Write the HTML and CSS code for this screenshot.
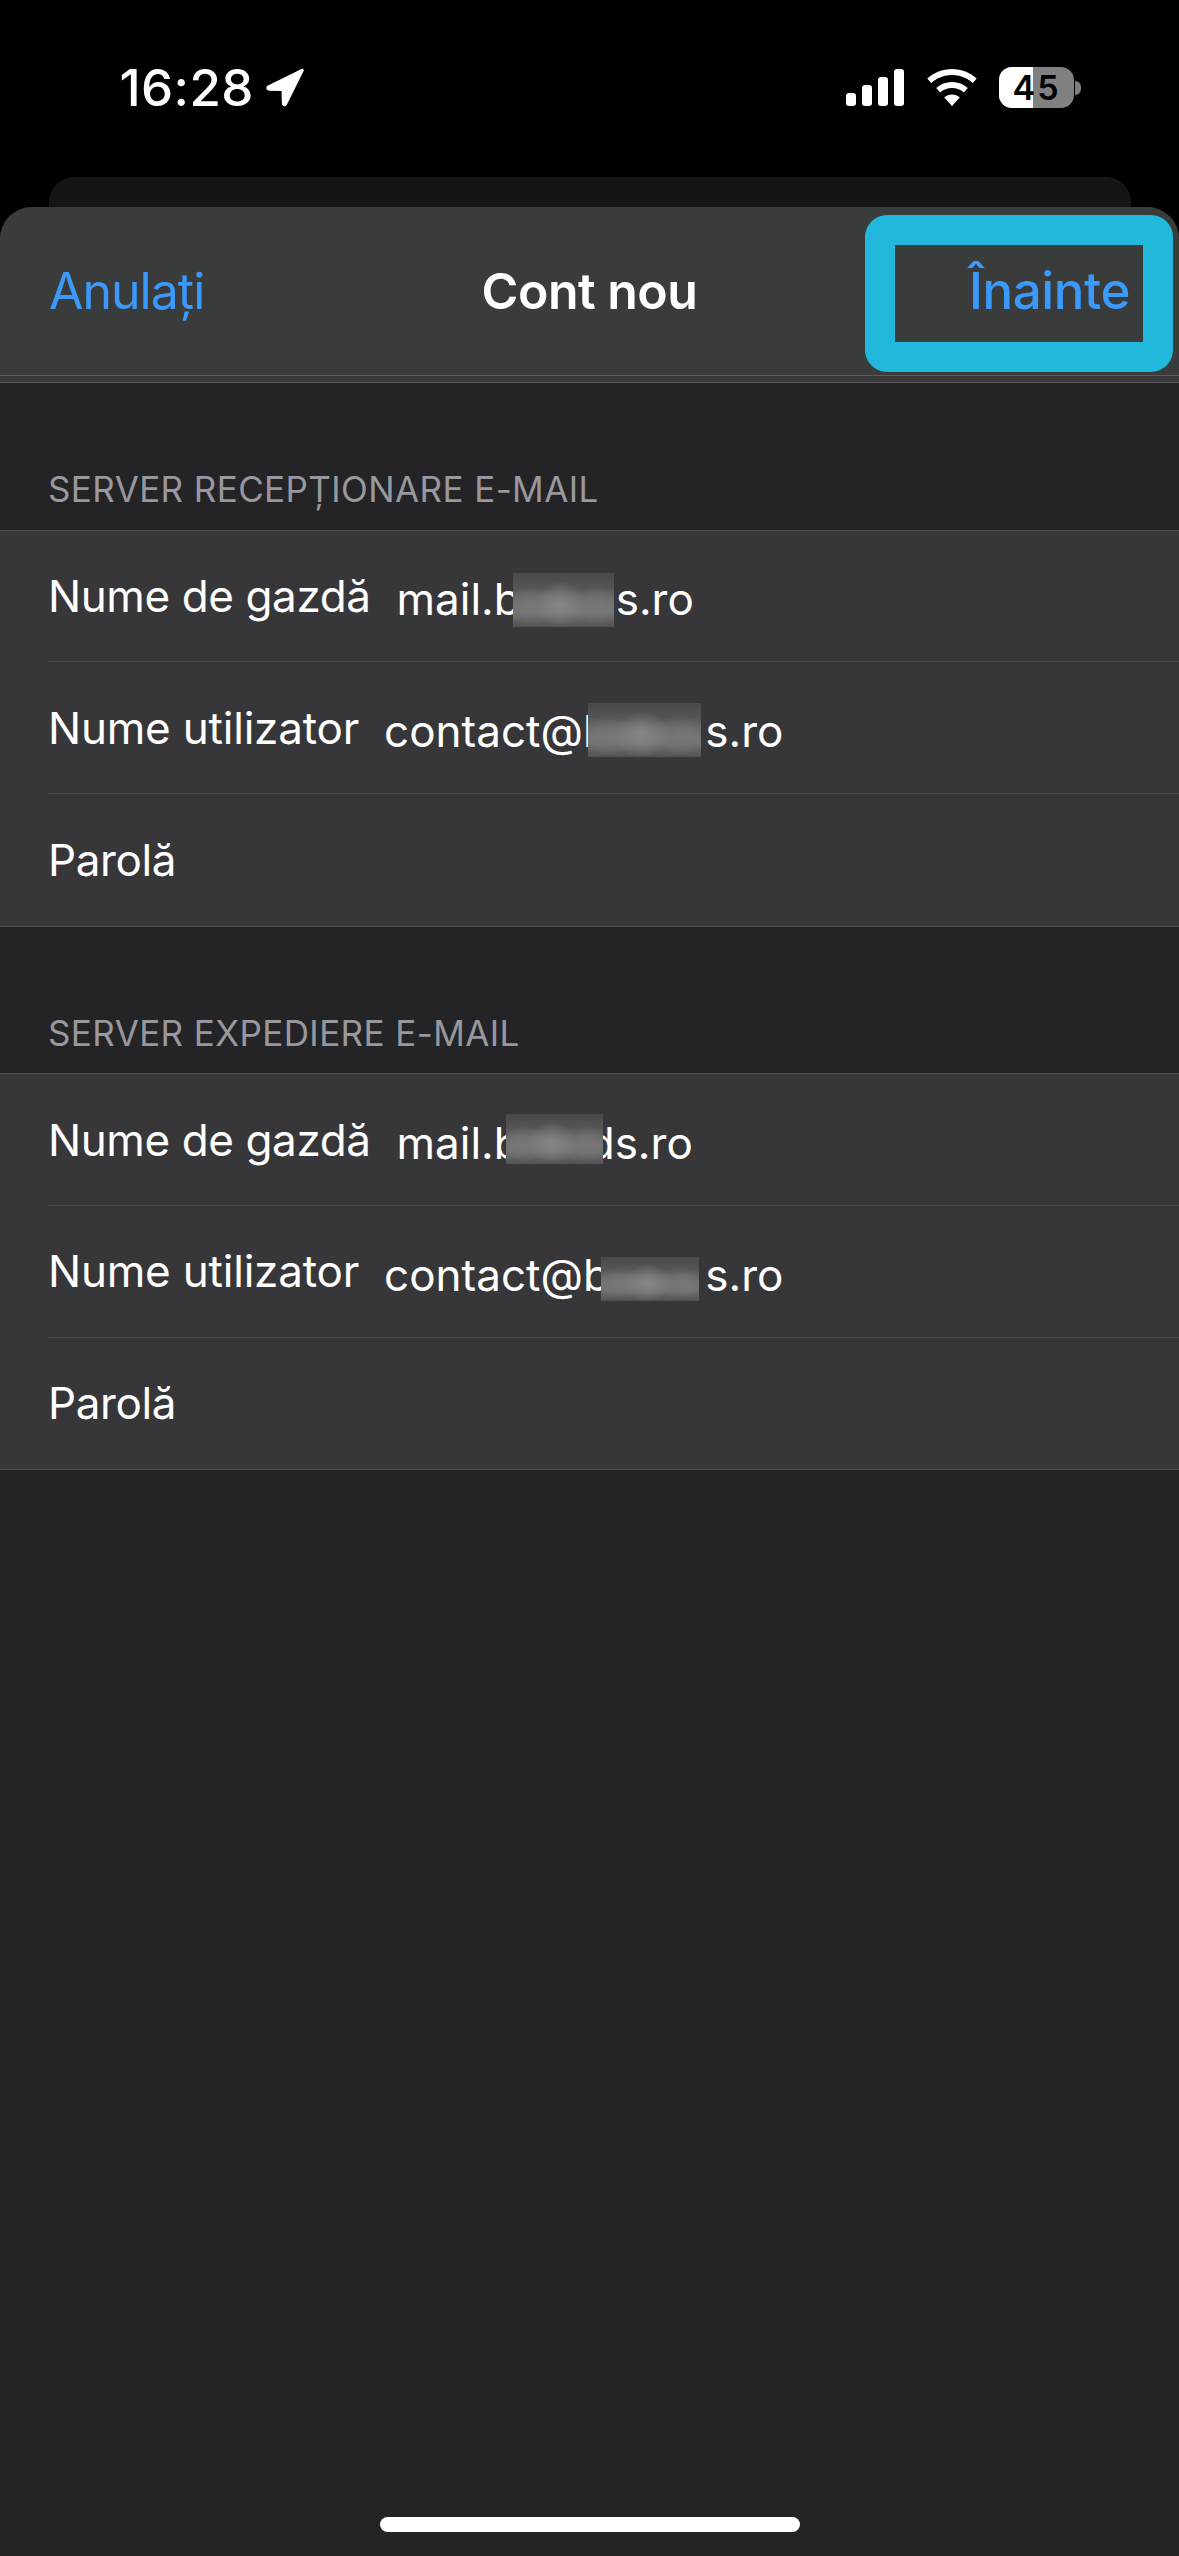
FILE: index.html
```html
<!DOCTYPE html>
<html lang="ro">
<head>
<meta charset="utf-8">
<title>Cont nou</title>
<link rel="stylesheet" href="styles.css">
</head>
<body>
<div class="screen">
  <header class="status">
    <div class="status-left">
      <span class="time">16:28</span>
      <svg class="loc" viewBox="0 0 39 39"><path d="M36.5 1 3 17.6c-2.7 1.4-1.9 5 1.100 5.100L16.500 23l.4 12.600c.1 3.100 3.900 3.800 5.100 1L38.600 3c.7-1.500-.7-2.800-2.100-2z" fill="#fff"/></svg>
    </div>
    <div class="status-right">
      <svg class="signal" viewBox="0 0 58 37"><rect x="0" y="24" width="10" height="13" rx="3" fill="#fff"/><rect x="16" y="16" width="10" height="21" rx="3" fill="#fff"/><rect x="32" y="8" width="10" height="29" rx="3" fill="#fff"/><rect x="48" y="0" width="10" height="37" rx="3" fill="#fff"/></svg>
      <svg class="wifi" viewBox="0 0 50 37"><path d="M25 0c9.500 0 18.200 3.600 24.700 9.600l-3.900 4.500C40.300 9 33 6 25 6S9.700 9 4.200 14.100L.3 9.600C6.800 3.600 15.500 0 25 0z" fill="#fff"/><path d="M25 13c6.100 0 11.600 2.300 15.800 6l-3.900 4.500c-3.200-2.800-7.400-4.500-11.900-4.500s-8.700 1.700-11.900 4.500L9.200 19c4.200-3.700 9.700-6 15.800-6z" fill="#fff"/><path d="M25 25.500c3 0 5.700 1.100 7.800 2.900L25 37l-7.800-8.600c2.100-1.800 4.800-2.900 7.800-2.900z" fill="#fff"/></svg>
      <div class="battery">
        <div class="cell"><span class="fill"></span><span class="pct">45</span></div>
        <span class="tip"></span>
      </div>
    </div>
  </header>

  <div class="peek"></div>

  <main class="sheet">
    <nav class="nav">
      <span class="nav-btn nav-cancel">Anulați</span>
      <span class="nav-title">Cont nou</span>
      <span class="nav-btn nav-next">Înainte<span class="mark"></span></span>
    </nav>
    <div class="strip"></div>

    <section class="group">
      <h2 class="group-title">SERVER RECEPȚIONARE E-MAIL</h2>
      <div class="rows">
        <div class="row">
          <span class="label">Nume de gazdă</span>
          <span class="value value-host">mail.b<span class="gap gap-a"><i class="blur"></i></span>s.ro</span>
        </div>
        <div class="row">
          <span class="label label-user">Nume utilizator</span>
          <span class="value value-user">contact@b<span class="gap gap-b"><i class="blur"></i></span>s.ro</span>
        </div>
        <div class="row"><span class="label">Parolă</span></div>
      </div>
    </section>

    <section class="group">
      <h2 class="group-title">SERVER EXPEDIERE E-MAIL</h2>
      <div class="rows">
        <div class="row">
          <span class="label">Nume de gazdă</span>
          <span class="value value-host">mail.b<span class="gap gap-c"><i class="blur"></i></span>ds.ro</span>
        </div>
        <div class="row">
          <span class="label label-user">Nume utilizator</span>
          <span class="value value-user">contact@b<span class="gap gap-d"><i class="blur"></i></span>s.ro</span>
        </div>
        <div class="row"><span class="label">Parolă</span></div>
      </div>
    </section>

    <div class="home"></div>
  </main>
</div>
</body>
</html>
```
FILE: styles.css
```css
* { box-sizing: border-box; }
html, body { margin: 0; padding: 0; background: #000; }
body { font-family: Inter, "Noto Sans", sans-serif; color: #fff; }
.screen { width: 1179px; height: 2556px; display: flex; flex-direction: column; overflow: hidden; }

.status { height: 177px; display: flex; justify-content: space-between; align-items: flex-start; padding: 67px 98px 0 119.500px; flex: none; }
.status-left { display: flex; align-items: center; gap: 11px; height: 41px; }
.time { font-size: 51px; font-weight: 500; line-height: 41px; letter-spacing: 0.4px; }
.loc { width: 39px; height: 39px; display: block; }
.status-right { display: flex; align-items: center; height: 41px; }
.signal { width: 58px; height: 37px; display: block; }
.wifi { width: 50px; height: 37px; display: block; margin-left: 23px; }
.battery { display: flex; align-items: center; margin-left: 22px; }
.cell { position: relative; width: 75px; height: 41px; border-radius: 13px; background: #808080; overflow: hidden; display: flex; align-items: center; justify-content: center; }
.fill { position: absolute; left: 0; top: 0; bottom: 0; width: 34px; background: #fff; }
.pct { position: relative; color: #000; font-size: 34px; font-weight: 600; line-height: 1; letter-spacing: 2px; }
.tip { width: 6px; height: 14px; margin-left: 1px; background: #808080; border-radius: 0 7px 7px 0; }

.peek { flex: none; height: 30px; margin: 0 48px 0 49px; background: #151515; border-radius: 25px 25px 0 0; }

.sheet { position: relative; flex: 1; background: #242426; border-radius: 32px 32px 0 0; overflow: hidden; }

.nav { position: relative; height: 168px; padding: 0 49px; background: #3a3c3b; display: flex; align-items: center; justify-content: space-between; }
.nav-btn { font-size: 51px; color: #3b99fc; line-height: 62px; }
.nav-cancel { font-size: 50px; letter-spacing: -1px; }
.nav-next { font-weight: 500; letter-spacing: -0.4px; }
.nav-title { position: absolute; left: 0; right: 0; text-align: center; font-size: 50px; font-weight: 600; line-height: 62px; letter-spacing: -0.5px; }
.mark { position: absolute; left: 865px; top: 8px; width: 308px; height: 157px; border: solid #22b8dc; border-width: 30px; border-radius: 22px; }

.strip { height: 8px; background: #3a3a3c; border-top: 1px solid #5c5c5e; border-bottom: 1px solid #5a5a5c; }

.group-title { margin: 0; height: 146.600px; padding: 84px 48px 0; font-size: 35px; font-weight: 400; line-height: 44px; color: #98989e; letter-spacing: 0.4px; }
.rows { background: #373739; border-top: 1px solid #4e4e50; border-bottom: 1px solid #4e4e50; }
.row { height: 131.700px; margin-left: 48px; display: flex; align-items: center; border-bottom: 1px solid #48484a; }
.row:last-child { border-bottom: 0; }
.label { font-size: 44px; line-height: 52px; letter-spacing: -0.4px; }
.label-user { letter-spacing: -0.2px; }
.value { font-size: 44px; line-height: 52px; padding-top: 7px; white-space: nowrap; }
.value-host { margin-left: 26px; }
.value-user { margin-left: 25px; }
.gap { position: relative; display: inline-block; height: 1px; }
.blur {
  position: absolute;
  background:
    radial-gradient(ellipse 26% 42% at 47% 58%, #868686, transparent),
    radial-gradient(ellipse 30% 36% at 18% 60%, #777, transparent),
    radial-gradient(ellipse 30% 36% at 82% 60%, #777, transparent),
    linear-gradient(#49494b, #565657 30%, #717171 58%, #737373 72%, #525254);
}
.gap-a { width: 95px; }
.gap-a .blur { left: -8px; width: 101px; bottom: -12px; height: 54px; }
.gap-b { width: 95.500px; }
.gap-b .blur { left: -21.500px; width: 113px; bottom: -10px; height: 54px; }
.gap-c { width: 67px; }
.gap-c .blur { left: -15px; width: 97px; bottom: -5px; height: 50px; }
.gap-d { width: 95.500px; }
.gap-d .blur { left: -8.500px; width: 98px; bottom: -10px; height: 44px; }
.home { position: absolute; left: 380px; top: 2310px; width: 420px; height: 15px; background: #fff; border-radius: 8px; }
```
